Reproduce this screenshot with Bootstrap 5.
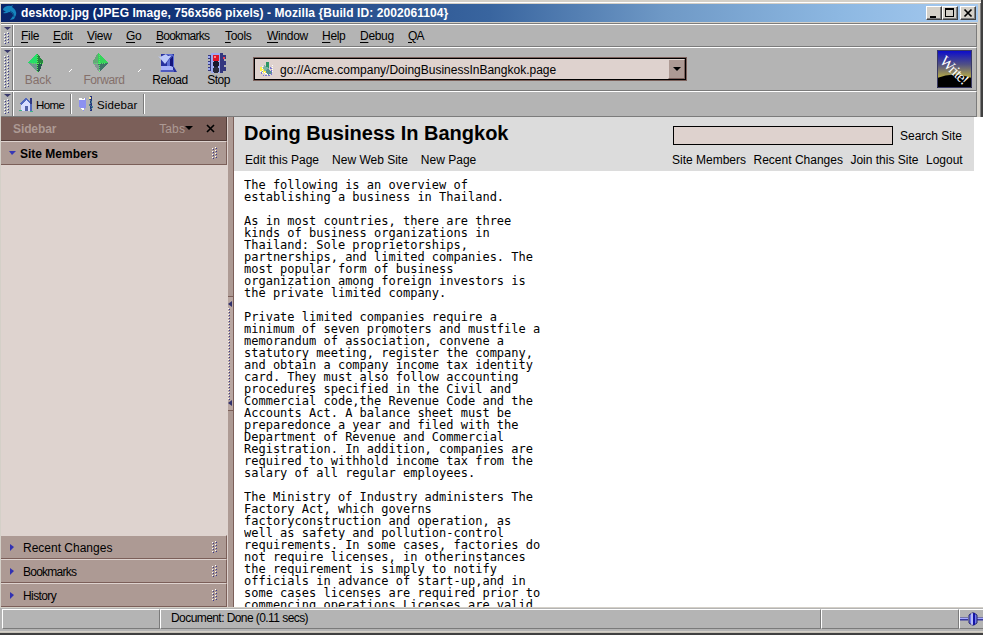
<!DOCTYPE html>
<html lang="en">
<head>
<meta charset="utf-8">
<title>desktop.jpg (JPEG Image, 756x566 pixels) - Mozilla</title>
<link href="https://cdn.jsdelivr.net/npm/bootstrap@5.3.0/dist/css/bootstrap.min.css" rel="stylesheet">
<style>
body{width:983px;height:635px;overflow:hidden;background:#fff;color:#000;font:12px/14px "Liberation Sans",Arial,sans-serif}
svg{display:block;flex:none}
.frame{width:983px;height:117px;background:#d4d0c8;padding:4px 3px 0 1px;border-right:2px solid #404040;box-shadow:inset 0 2px #d4d0c8,inset 0 3px #fff,inset -1px 0 #808080}
.titlebar{height:18px;background:linear-gradient(90deg,#0a246a 0,#0c2c70 12%,#39659f 50%,#6f99c6 68%,#8db8e2 86%,#a6caf0);color:#fff;padding:0 2px}
.titlebar .caption{font-weight:bold;margin-left:3px;letter-spacing:.08px}
.winbtn{width:16px;height:14px;background:#d4d0c8;border:1px solid;border-color:#fff #404040 #404040 #fff;box-shadow:inset -1px -1px #808080}
.bar{background:#b4b4b4;border-top:1px solid #fff;border-bottom:1px solid #7b7b7b;border-right:1px solid #7b7b7b;margin-right:1px}
.grip{width:11px;align-self:stretch;border-right:1px solid #7b7b7b;box-shadow:1px 0 #fff;padding:2px 2px;margin-left:1px}
.grip i{display:block;height:3px;width:7px;background:#39396b;clip-path:polygon(0 0,100% 0,50% 100%)}
.dots{background:
 conic-gradient(#0000 75%,#fff 0) -5px -1px/6px 3px,
 conic-gradient(#0000 75%,#fff 0) -2px -2px/6px 3px;
 --w:conic-gradient(from 270deg at 1px 1px,#fff 90deg,#0000 0);
 --b:conic-gradient(from 270deg at 1px 1px,#39398c 90deg,#0000 0);
 background:var(--w) 0 1px/6px 3px,var(--w) 3px 0/6px 3px,var(--b) 1px 2px/6px 3px,var(--b) 4px 1px/6px 3px}
.grip .dots{flex:1;margin-top:2px;width:6px}
.menubar{height:23px;margin-top:2px;box-shadow:0 -1px #7b7b7b}
.menus{display:grid;grid-template-columns:32px 34px 39px 30px 69px 42px 55px 38px 48px 30px;margin-left:8px;letter-spacing:-.3px}
.menus u{text-underline-offset:2px}
.tight{letter-spacing:-.75px}
.toolbar{height:44px}
.tool{padding-top:5px;text-align:center}
.tool svg{margin:0 auto}
.tool span{display:block}
.off{color:#84706b}
.tick{width:3px;height:3px;margin-top:21px;background:linear-gradient(135deg,transparent 42%,#fff 42% 65%,transparent 65%)}
.urlbox{width:434px;height:24px;margin:9px 0 0 15px;background:#ded2ce;border:1px solid #7b605b}
.urlbox>div{border:1px solid #000;height:22px}
.drop{width:17px;height:20px;background:#ad9a94;border:1px solid;border-color:#ded2ce #7b605b #7b605b #ded2ce}
.links{height:26px}
.links span{font-size:11.5px}
.cell{border-right:1px solid #7b7b7b;box-shadow:1px 0 #fff;height:20px}
.content-area{height:490px}
.side{width:227px;background:#ded3cf;border-left:1px solid #d4d0c8}
.sidehead{height:24px;background:#7b5f59;color:#ad9a94;border-bottom:1px solid #523d39;border-right:1px solid #523d39}
.panelhead{height:24px;background:#ad9a94;border-top:1px solid #ded3cf;border-bottom:1px solid #7b5f59;border-right:1px solid #7b5f59}
.panelhead .dots{width:6px;height:12px;margin-right:8px}
.panelhead span,.panelhead b{padding-top:2px}
.splitter{width:7px;background:#ad9a94;border-right:1px solid #7b5f59;border-left:1px solid #ded3cf;padding-bottom:17px}
.handle{height:115px;border-top:1px solid #7b5f59;border-bottom:1px solid #7b5f59;background:#b9a7a2;padding:4px 0}
.handle .dots{width:3px;flex:1}
.pagehead{width:740px;height:54px;background:#dcdcdc;padding:0 0 0 10px}
.pagehead h1{font-size:20px;line-height:24px;font-weight:bold;margin:4px 0 0}
.search{width:220px;height:19px;border:1px solid #000;background:#ded2ce;border-radius:0;padding:0}
.article{font:12px/12px "DejaVu Sans Mono",monospace;color:#000;margin:8px 0 0 10px;height:428px;overflow:hidden;white-space:pre}
.status{height:24px;background:#b4b4b4;border-top:1px solid #d4d0c8;padding-left:2px}
.status>div{height:20px;margin-top:1px;border:1px solid;border-color:#fff #7b7b7b #7b7b7b #fff}
.foot{height:4px;background:linear-gradient(#d4d0c8 0 1px,#c5c1b8 1px 2px,#404040 2px 4px)}
</style>
<script src="https://cdn.jsdelivr.net/npm/bootstrap@5.3.0/dist/js/bootstrap.bundle.min.js"></script>
</head>
<body>
<header class="frame">
  <div class="titlebar d-flex align-items-center">
    <svg width="15" height="16" viewBox="0 0 15 16"><path d="M0 4q3-4 8-3l2-1-1 2q5 3 4 8l-2 4-4 1 3-4q0-4-4-4-3 2-6 1l3-2q-3 0-3-2z" fill="#1684bd"/><path d="M7 6q4 1 4 6" stroke="#0b4f86" fill="none"/></svg>
    <div class="caption text-nowrap">desktop.jpg (JPEG Image, 756x566 pixels) - Mozilla {Build ID: 2002061104}</div>
    <div class="d-flex ms-auto">
      <div class="winbtn"><svg width="14" height="12"><path d="M3 9h6v2H3z"/></svg></div>
      <div class="winbtn"><svg width="14" height="12" shape-rendering="crispEdges"><path d="M2 1h9v9H2zM3 3v6h7V3z" fill-rule="evenodd"/></svg></div>
      <div class="winbtn" style="margin-left:2px"><svg width="14" height="12"><path d="M3.500 2.500l7 7m0-7l-7 7" stroke="#000" stroke-width="1.700"/></svg></div>
    </div>
  </div>
  <nav class="bar menubar d-flex align-items-center">
    <div class="grip d-flex flex-column"><i></i><div class="dots"></div></div>
    <div class="menus"><span><u>F</u>ile</span><span><u>E</u>dit</span><span><u>V</u>iew</span><span><u>G</u>o</span><span class="tight"><u>B</u>ookmarks</span><span><u>T</u>ools</span><span><u>W</u>indow</span><span><u>H</u>elp</span><span><u>D</u>ebug</span><span class="tight"><u>Q</u>A</span></div>
  </nav>
  <div class="bar toolbar d-flex">
    <div class="grip d-flex flex-column"><i></i><div class="dots"></div></div>
    <div class="tool off" style="width:50px"><svg style="position:relative;left:-2px" width="16" height="20" viewBox="0 0 16 20" shape-rendering="crispEdges"><path d="M9 0L0 10h9z" fill="#25df68"/><path d="M9 0l6 8v2H9z" fill="#27873f"/><path d="M0 10h9v9z" fill="#719790"/><path d="M9 10h6l-4 9H9z" fill="#245b4d"/><path d="M9 2v17M4 10h11" stroke="#52f354" stroke-dasharray="1 1"/></svg><span>Back</span></div>
    <div class="tick" style="margin-left:6px"></div>
    <div class="tool off" style="width:64px;letter-spacing:-.4px"><svg style="position:relative;left:-3px" width="16" height="20" viewBox="0 0 16 20" shape-rendering="crispEdges"><path d="M5 0L0 8v2h6z" fill="#65a879"/><path d="M5 0l10 10H5z" fill="#35d55a"/><path d="M0 10h6v9z" fill="#849894"/><path d="M5 10h10l-8 9z" fill="#417568"/><path d="M6 2v17M1 10h12" stroke="#50ef67" stroke-dasharray="1 1"/></svg><span>Forward</span></div>
    <div class="tick" style="margin-left:2px"></div>
    <div class="tool" style="width:58px;letter-spacing:-.4px"><svg style="position:relative;left:-2px" width="20" height="20" viewBox="0 0 20 20"><path d="M3 1h13v13l3 5H3z" fill="#27319f"/><path d="M0 3l7 8 7-9-4 1-2-2-6 3z" fill="#bcc9fa"/><path d="M7 1h7l2 2v11H9V9l5-6z" fill="#5e70d5"/><path d="M12 6l3-3v11h-3z" fill="#13157c"/><path d="M3 13h10l2 1v3H3z" fill="#a9b4fa"/><path d="M2 18h14" stroke="#7784df"/></svg><span>Reload</span></div>
    <div class="tool" style="width:39px;letter-spacing:-.5px"><svg style="position:relative;left:-2px" width="20" height="20" viewBox="0 0 20 20" shape-rendering="crispEdges"><path d="M1 2h3V0h12v2h3v4h-2v2h2v4h-2v2h2v4h-3v2H4v-2H1v-4h2v-2H1V8h2V6H1z" fill="#34377f"/><path d="M4 0h9v20H4zM1 3h2v2H1zm0 6h2v2H1zm0 6h2v2H1z" fill="#9da9ee"/><circle cx="9" cy="5" r="3.500" fill="#e01428"/><circle cx="9" cy="11" r="3" fill="#17182c"/><circle cx="9" cy="17" r="3" fill="#292b3c"/><path d="M16 4h2v2h-2z" fill="#ec4155"/><path d="M7 3h2v2H7z" fill="#ff8585"/></svg><span>Stop</span></div>
    <div class="urlbox"><div class="d-flex align-items-center">
      <svg class="ms-1" width="16" height="16" viewBox="0 0 16 16" shape-rendering="crispEdges"><path d="M7 1h3v6H7z" fill="#2c9666"/><path d="M5 4l5 3-2 5H3z" fill="#7fb6a5"/><path d="M9 7l4 5-4 2-3-3z" fill="#578f92"/><path d="M1 6h2v2h2v2H1zm3 4h3v2H4z" fill="#fff24c"/><path d="M2 11l2 3 4 1 4-1 1-5-2-3" fill="none" stroke="#7375d4" stroke-dasharray="2 1"/><path d="M3 5v8m-2-3l9 4M13 4v7" stroke="#fff" stroke-dasharray="1 1"/></svg>
      <span style="margin:1px 0 0 5px">go://Acme.company/DoingBusinessInBangkok.page</span>
      <div class="drop ms-auto"><svg width="15" height="18"><path d="M4 7h8l-4 4z"/></svg></div>
    </div></div>
    <svg class="ms-auto" style="margin:2px 4px 0 0" width="35" height="38" viewBox="0 0 35 38"><defs><linearGradient id="sky" x2="0" y2="1"><stop stop-color="#0808d0"/><stop offset=".38" stop-color="#515184"/><stop offset=".72" stop-color="#b6aa45"/></linearGradient></defs><path d="M0 0h35v38H0z" fill="url(#sky)"/><path d="M0 28q17-7 35 0v10H0z" fill="#000"/><path d="M.5.5h34v37H.5z" fill="none" stroke="#393963"/><text x="2" y="12" transform="rotate(44 2 12)" font-family="Liberation Serif,serif" font-size="15" fill="#fff" textLength="34">Write!</text></svg>
  </div>
  <div class="bar links d-flex align-items-center">
    <div class="grip d-flex flex-column"><i></i><div class="dots"></div></div>
    <div class="cell d-flex align-items-center" style="width:58px;padding-left:6px"><svg width="15" height="15" viewBox="0 0 15 15" shape-rendering="crispEdges"><path d="M7 0l6 7v7H2V7H0z" fill="#5268bd"/><path d="M7 3l4 4v7H2V8z" fill="#d8ddff"/><path d="M11 1h2v6h-2z" fill="#303983"/><path d="M6 9h3v5H6z" fill="#5360a7"/><path d="M0 13h3v1H0m11 0h3v1h-3z" fill="#42b08a"/></svg><span style="margin:1px 0 0 2px;letter-spacing:-.6px">Home</span></div>
    <div class="cell d-flex align-items-center" style="width:73px;padding-left:8px"><svg width="15" height="16" viewBox="0 0 15 16" shape-rendering="crispEdges"><path d="M0 2h2l2 2 3-2v9l-2 2v2l-5-4z" fill="#8c91f1"/><path d="M0 2h2l1 1 3-1v2H0zm2 10h3v2H3z" fill="#fff"/><path d="M11 0h2v15h-2z" fill="#25347e"/><path d="M10 3l3 3-3 3 4 2-3 3" fill="none" stroke="#437f91"/><path d="M10 1h2v2h-2z" fill="#ffe79f"/></svg><span style="margin:1px 0 0 3px;letter-spacing:.1px">Sidebar</span></div>
  </div>
</header>

<main class="content-area d-flex">
  <aside class="side d-flex flex-column">
    <div class="sidehead d-flex align-items-center"><b style="margin-left:12px;letter-spacing:-.1px">Sidebar</b><span class="ms-auto" style="letter-spacing:.1px">Tabs</span><svg width="8" height="5"><path d="M0 0h8L4 4z"/></svg><svg style="margin:0 11px 0 13px" width="9" height="9"><path d="M1 1l7 7m0-7L1 8" stroke="#000" stroke-width="1.600"/></svg></div>
    <div class="panelhead d-flex align-items-center"><svg style="margin-left:8px" width="7" height="5"><path d="M0 0h7L3 4z" fill="#3737b5"/></svg><b style="margin-left:4px">Site Members</b><div class="dots ms-auto"></div></div>
    <div class="flex-fill"></div>
    <div class="panelhead d-flex align-items-center"><svg style="margin-left:9px" width="5" height="7"><path d="M0 0l4 3-4 4z" fill="#3131b3"/></svg><span style="margin-left:8px">Recent Changes</span><div class="dots ms-auto"></div></div>
    <div class="panelhead d-flex align-items-center"><svg style="margin-left:9px" width="5" height="7"><path d="M0 0l4 3-4 4z" fill="#3131b3"/></svg><span class="tight" style="margin-left:8px">Bookmarks</span><div class="dots ms-auto"></div></div>
    <div class="panelhead d-flex align-items-center"><svg style="margin-left:9px" width="5" height="7"><path d="M0 0l4 3-4 4z" fill="#3131b3"/></svg><span style="margin-left:8px;letter-spacing:-.6px">History</span><div class="dots ms-auto"></div></div>
  </aside>
  <div class="splitter d-flex flex-column justify-content-center"><div class="handle d-flex flex-column"><svg width="4" height="6"><path d="M4 0v6L0 3z" fill="#30306b"/></svg><div class="dots"></div><svg width="4" height="6"><path d="M4 0v6L0 3z" fill="#30306b"/></svg></div></div>
  <section>
    <div class="pagehead d-flex">
      <div><h1 class="text-nowrap">Doing Business In Bangkok</h1><div class="d-flex" style="margin:8px 0 0 1px;gap:13px"><span>Edit this Page</span><span>New Web Site</span><span>New Page</span></div></div>
      <div class="ms-auto" style="width:302px;padding-top:9px"><div class="d-flex align-items-center" style="margin-left:1px;gap:7px"><input class="search" aria-label="Search"><span>Search Site</span></div><div class="d-flex text-nowrap" style="margin-top:8px;gap:7.500px"><span>Site Members</span><span>Recent Changes</span><span>Join this Site</span><span>Logout</span></div></div>
    </div>
    <div class="article">The following is an overview of
establishing a business in Thailand.

As in most countries, there are three
kinds of business organizations in
Thailand: Sole proprietorships,
partnerships, and limited companies. The
most popular form of business
organization among foreign investors is
the private limited company.

Private limited companies require a
minimum of seven promoters and mustfile a
memorandum of association, convene a
statutory meeting, register the company,
and obtain a company income tax identity
card. They must also follow accounting
procedures specified in the Civil and
Commercial code,the Revenue Code and the
Accounts Act. A balance sheet must be
preparedonce a year and filed with the
Department of Revenue and Commercial
Registration. In addition, companies are
required to withhold income tax from the
salary of all regular employees.

The Ministry of Industry administers The
Factory Act, which governs
factoryconstruction and operation, as
well as safety and pollution-control
requirements. In some cases, factories do
not require licenses, in otherinstances
the requirement is simply to notify
officials in advance of start-up,and in
some cases licenses are required prior to
commencing operations.Licenses are valid</div>
  </section>
</main>
<footer>
  <div class="status d-flex"><div style="width:158px"></div><div style="width:661px;padding:1px 0 0 10px;letter-spacing:-.57px">Document: Done (0.11 secs)</div><div style="width:138px"></div><div class="flex-fill border-end-0"><svg width="23" height="18" viewBox="0 0 23 18"><path d="M0 9h8m9 0h6" stroke="#38389b" stroke-width="3"/><path d="M0 8.500h8m9 0h6" stroke="#a7abff"/><path d="M9 5l3-2h2l3 2v8l-3 2h-2l-3-2z" fill="#7078ef" stroke="#25256c"/><path d="M12 3v12" stroke="#fff"/><path d="M14 3v12" stroke="#1515a6" stroke-width="2"/></svg></div></div>
  <div class="foot"></div>
</footer>
</body>
</html>
